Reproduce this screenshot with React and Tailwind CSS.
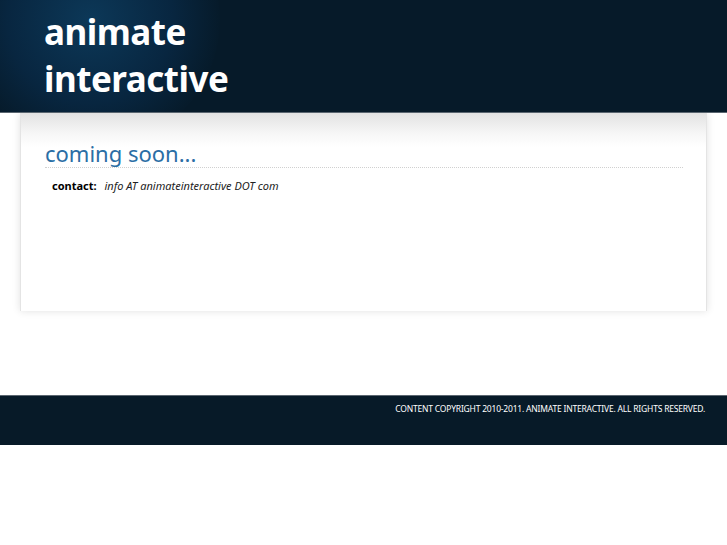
export default function App() {
  return (
    <div className="w-[727px] h-[545px] bg-white font-['Liberation_Sans',sans-serif]">
      <div className="relative h-[113px] bg-[#061a29] overflow-hidden border-b border-[#5a6670]">
        <div className="absolute -left-[40px] -top-[110px] w-[260px] h-[260px] rounded-full bg-[radial-gradient(circle,#0c3858_0%,#082640_45%,#061a29_72%)]" />
        <div className="relative pl-[44px] pt-[8px] font-['Liberation_Serif',serif] font-bold text-white text-[35px] leading-[47px] tracking-[-0.5px]">
          <div>animate</div>
          <div>interactive</div>
        </div>
      </div>
      <div className="mx-[20px] h-[198px] border-x border-[#e4e4e4] shadow-[0_0_8px_rgba(0,0,0,0.12)] bg-[linear-gradient(#e2e2e2_0px,#f6f6f6_20px,#ffffff_34px)] px-[24px] pt-[27px]">
        <div className="font-['Liberation_Serif',serif] text-[#2b6ea5] text-[22px] leading-[26px] pb-[1px] border-b border-dotted border-[#d0d0d0] mr-[-1px] w-[638px]">
          coming soon...
        </div>
        <div className="pl-[7px] pt-[10px] text-[11px] text-[#222]">
          <span className="font-bold text-black">contact:</span>{"  "}
          <span className="italic ml-[5px]">info AT animateinteractive DOT com</span>
        </div>
      </div>
      <div className="mt-[84px] h-[50px] bg-[#071a28] border-t border-[#5b6670] flex justify-end pr-[22px] pt-[7px]">
        <span className="text-white text-[8.5px] tracking-[-0.2px]">
          CONTENT COPYRIGHT 2010-2011. ANIMATE INTERACTIVE. ALL RIGHTS RESERVED.
        </span>
      </div>
    </div>
  );
}
